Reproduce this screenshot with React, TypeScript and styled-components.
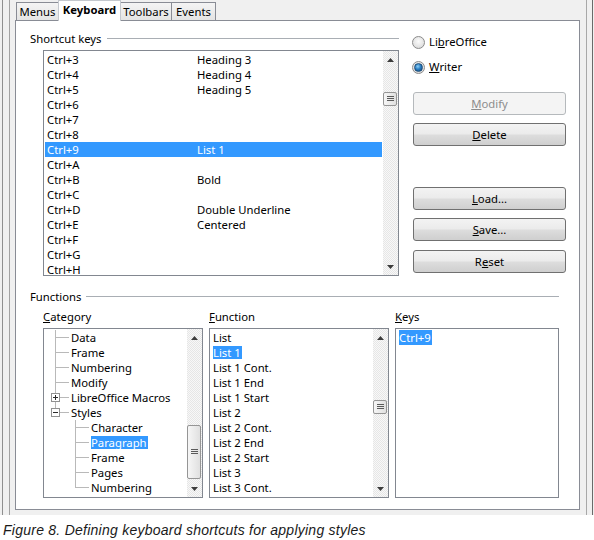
import React from 'react';
import styled, { createGlobalStyle, css } from 'styled-components';

const UI_FONT = `"Segoe UI", "Noto Sans", "Open Sans", sans-serif`;

const Global = createGlobalStyle`
  html, body { margin: 0; padding: 0; background: #ffffff; }
  * { box-sizing: border-box; }
`;

const Page = styled.div`
  width: 594px;
  height: 540px;
  overflow: hidden;
  background: #ffffff;
`;

const Dialog = styled.div`
  height: 515px;
  padding: 2px 0 0 15px;
  background-color: #f0f0f0;
  background-image: linear-gradient(
    to right,
    transparent 2px, #8f8f8f 2px, #8f8f8f 3px, transparent 3px,
    transparent 9px, #a2a2a2 9px, #a2a2a2 10px, transparent 10px,
    transparent 586px, #a8a8a8 586px, #a8a8a8 587px, transparent 587px,
    transparent 592px, #6a6a6a 592px, #6a6a6a 593px, transparent 593px
  );
  font-family: ${UI_FONT};
  font-size: 11.3px;
  color: #000;
`;

const TabBar = styled.div`
  display: flex;
  height: 18px;
  padding-left: 1px;
  align-items: flex-end;
`;

const Tab = styled.div<{ $w: number; $active?: boolean }>`
  width: ${p => p.$w}px;
  height: 18px;
  margin-right: -1px;
  border: 1px solid #898c95;
  border-bottom: none;
  background: linear-gradient(#f4f4f4, #e4e4e4);
  display: flex;
  align-items: center;
  justify-content: center;
  line-height: 14px;
  white-space: nowrap;
  ${p =>
    p.$active &&
    css`
      height: 21px;
      margin-top: -3px;
      margin-bottom: -1px;
      background: #ffffff;
      font-weight: bold;
      position: relative;
      z-index: 1;
      border-color: #c4c8ce;
      padding-bottom: 3px;
    `}
`;

const Panel = styled.div`
  width: 565px;
  height: 490px;
  border: 1px solid #898c95;
  background: #ffffff;
  padding: 10px 0 0 14px;
`;

const TopRow = styled.div`
  display: flex;
`;

const LeftCol = styled.div`
  width: 369px;
  display: flex;
  flex-direction: column;
  gap: 4px;
`;

const GroupHeader = styled.div<{ $w: number }>`
  width: ${p => p.$w}px;
  height: 15px;
  display: flex;
  align-items: center;
  gap: 5px;
  line-height: 15px;
  white-space: nowrap;
`;

const HeaderLine = styled.div`
  flex: 1;
  height: 1px;
  background: #a9aeb4;
`;

const ListBox = styled.div<{ $w: number; $h: number; $ml?: number }>`
  width: ${p => p.$w}px;
  height: ${p => p.$h}px;
  margin-left: ${p => p.$ml ?? 0}px;
  border: 1px solid #828790;
  background: #fff;
  display: flex;
  overflow: hidden;
`;

const Rows = styled.div<{ $pl?: number }>`
  flex: 1;
  padding-top: 1px;
  padding-left: ${p => p.$pl ?? 0}px;
  overflow: hidden;
  white-space: nowrap;
`;

const KeyRow = styled.div<{ $sel?: boolean }>`
  height: 15px;
  line-height: 15px;
  margin: 0 1px;
  padding-left: 2px;
  display: grid;
  grid-template-columns: 150px 1fr;
  ${p =>
    p.$sel &&
    css`
      background: #3399ff;
      color: #fff;
    `}
`;

const SBar = styled.div`
  width: 15px;
  flex: none;
  display: flex;
  flex-direction: column;
  background-color: #eeeeee;
  background-image: repeating-conic-gradient(#f8f8f8 0 25%, #e6e6e6 0 50%);
  background-size: 2px 2px;
`;

const SArrow = styled.div`
  height: 17px;
  flex: none;
  display: flex;
  align-items: center;
  justify-content: center;
`;

const SSpacer = styled.div<{ $h?: number }>`
  flex: ${p => (p.$h === undefined ? 1 : 'none')};
  height: ${p => (p.$h === undefined ? 'auto' : `${p.$h}px`)};
`;

const SThumb = styled.div<{ $h: number }>`
  height: ${p => p.$h}px;
  flex: none;
  margin-right: 1px;
  border: 1px solid #959595;
  border-radius: 2px;
  background: linear-gradient(to right, #f6f6f6, #e0e0e0);
  display: flex;
  align-items: center;
  justify-content: center;
`;

const Arrow = ({ down }: { down?: boolean }) => (
  <svg width="7" height="4" viewBox="0 0 7 4">
    <path d={down ? 'M0 0 H7 L3.5 4 Z' : 'M0 4 H7 L3.5 0 Z'} fill="#3c3c3c" />
  </svg>
);

const Grip = () => (
  <svg width="7" height="6" viewBox="0 0 7 6">
    <path d="M0 0.5 H7 M0 2.5 H7 M0 4.5 H7" stroke="#5a5a5a" strokeWidth="1" />
  </svg>
);

const Scrollbar = ({ top, thumb }: { top: number; thumb: number }) => (
  <SBar>
    <SArrow>
      <Arrow />
    </SArrow>
    <SSpacer $h={top} />
    <SThumb $h={thumb}>
      <Grip />
    </SThumb>
    <SSpacer />
    <SArrow>
      <Arrow down />
    </SArrow>
  </SBar>
);

const RightCol = styled.div`
  margin-left: 13px;
  padding-top: 3px;
  display: flex;
  flex-direction: column;
`;

const RadioRow = styled.div<{ $mt?: number }>`
  height: 16px;
  margin-top: ${p => p.$mt ?? 0}px;
  display: flex;
  align-items: center;
  gap: 4px;
  line-height: 16px;
`;

const RadioCircle = styled.span<{ $on?: boolean }>`
  width: 13px;
  height: 13px;
  border-radius: 50%;
  border: 1px solid #8b8b8b;
  background: radial-gradient(circle at 50% 40%, #fbfbfb 0%, #e4e4e4 60%, #cfcfcf 100%);
  display: flex;
  align-items: center;
  justify-content: center;
  &::after {
    content: '';
    display: ${p => (p.$on ? 'block' : 'none')};
    width: 7px;
    height: 7px;
    border-radius: 50%;
    background: radial-gradient(circle at 40% 35%, #8fd0f5 0%, #2a7fc4 45%, #0d3f73 100%);
    border: 1px solid #1e4d78;
  }
`;

const Button = styled.div<{ $mt: number; $disabled?: boolean }>`
  width: 153px;
  height: 23px;
  margin-top: ${p => p.$mt}px;
  margin-left: 1px;
  border: 1px solid #707070;
  border-radius: 3px;
  background: linear-gradient(#f3f3f3 0%, #ebebeb 48%, #dddddd 52%, #cfcfcf 100%);
  display: flex;
  align-items: center;
  justify-content: center;
  line-height: 15px;
  ${p =>
    p.$disabled &&
    css`
      border-color: #b5b9bc;
      background: #f4f4f4;
      color: #8d8d8d;
    `}
`;

const BottomSection = styled.div`
  margin-top: 13px;
  display: flex;
  flex-direction: column;
`;

const Columns = styled.div`
  display: flex;
  gap: 6px;
  margin-left: 13px;
  margin-top: 5px;
`;

const Column = styled.div`
  display: flex;
  flex-direction: column;
  gap: 4px;
`;

const ColLabel = styled.div`
  height: 15px;
  line-height: 15px;
`;

const TreeRow = styled.div`
  height: 15px;
  display: flex;
  align-items: center;
  line-height: 15px;
`;

const Gutter = styled.span<{ $level: number; $last?: boolean }>`
  flex: none;
  height: 15px;
  display: flex;
  align-items: center;
  width: ${p => (p.$level === 0 ? 27 : 47)}px;
  ${p => {
    const x = p.$level === 0 ? 11 : 31;
    const end = p.$level === 0 ? 25 : 45;
    const vh = p.$last ? '8px' : '15px';
    return css`
      background-image: linear-gradient(#b9b9b9, #b9b9b9), linear-gradient(#b9b9b9, #b9b9b9);
      background-repeat: no-repeat;
      background-size: 1px ${vh}, ${end - x}px 1px;
      background-position: ${x}px 0, ${x}px 7px;
    `;
  }}
`;

const Expander = styled.span`
  width: 9px;
  height: 9px;
  margin-left: 7px;
  border: 1px solid #919191;
  background: #fff;
  display: flex;
  align-items: center;
  justify-content: center;
`;

const Sel = styled.span<{ $tall?: boolean }>`
  background: #3399ff;
  color: #fff;
  line-height: ${p => (p.$tall ? 15 : 13)}px;
  display: inline-block;
  padding: 0 1px 0 0;
`;

const FuncRow = styled.div`
  height: 15px;
  line-height: 15px;
`;

const Caption = styled.div`
  height: 25px;
  padding: 6px 0 0 3px;
  font-family: "Liberation Sans", Arial, sans-serif;
  font-style: italic;
  font-size: 14px;
  letter-spacing: 0.25px;
  line-height: 18px;
  color: #1a1a1a;
`;

const shortcuts: [string, string][] = [
  ['Ctrl+3', 'Heading 3'],
  ['Ctrl+4', 'Heading 4'],
  ['Ctrl+5', 'Heading 5'],
  ['Ctrl+6', ''],
  ['Ctrl+7', ''],
  ['Ctrl+8', ''],
  ['Ctrl+9', 'List 1'],
  ['Ctrl+A', ''],
  ['Ctrl+B', 'Bold'],
  ['Ctrl+C', ''],
  ['Ctrl+D', 'Double Underline'],
  ['Ctrl+E', 'Centered'],
  ['Ctrl+F', ''],
  ['Ctrl+G', ''],
  ['Ctrl+H', ''],
];

type TreeItem = { label: string; level: number; last?: boolean; exp?: '+' | '-'; sel?: boolean };

const tree: TreeItem[] = [
  { label: 'Data', level: 0 },
  { label: 'Frame', level: 0 },
  { label: 'Numbering', level: 0 },
  { label: 'Modify', level: 0 },
  { label: 'LibreOffice Macros', level: 0, exp: '+' },
  { label: 'Styles', level: 0, exp: '-', last: true },
  { label: 'Character', level: 1 },
  { label: 'Paragraph', level: 1, sel: true },
  { label: 'Frame', level: 1 },
  { label: 'Pages', level: 1 },
  { label: 'Numbering', level: 1, last: true },
];

const functions = [
  'List',
  'List 1',
  'List 1 Cont.',
  'List 1 End',
  'List 1 Start',
  'List 2',
  'List 2 Cont.',
  'List 2 End',
  'List 2 Start',
  'List 3',
  'List 3 Cont.',
];

const ExpSign = ({ kind }: { kind: '+' | '-' }) => (
  <svg width="7" height="7" viewBox="0 0 7 7">
    <path d={kind === '+' ? 'M1 3.5 H6 M3.5 1 V6' : 'M1 3.5 H6'} stroke="#2b2b2b" strokeWidth="1" />
  </svg>
);

export default function App() {
  return (
    <Page>
      <Global />
      <Dialog>
        <TabBar>
          <Tab $w={43}>Menus</Tab>
          <Tab $w={63} $active>
            Keyboard
          </Tab>
          <Tab $w={52}>Toolbars</Tab>
          <Tab $w={45}>Events</Tab>
        </TabBar>
        <Panel>
          <TopRow>
            <LeftCol>
              <GroupHeader $w={369}>
                Shortcut keys
                <HeaderLine />
              </GroupHeader>
              <ListBox $w={356} $h={226} $ml={13}>
                <Rows>
                  {shortcuts.map(([k, v]) => (
                    <KeyRow key={k} $sel={k === 'Ctrl+9'}>
                      <span>{k}</span>
                      <span>{v}</span>
                    </KeyRow>
                  ))}
                </Rows>
                <Scrollbar top={24} thumb={14} />
              </ListBox>
            </LeftCol>
            <RightCol>
              <RadioRow>
                <RadioCircle />
                <span>
                  Li<u>b</u>reOffice
                </span>
              </RadioRow>
              <RadioRow $mt={9}>
                <RadioCircle $on />
                <span>
                  <u>W</u>riter
                </span>
              </RadioRow>
              <Button $mt={17} $disabled>
                <span>
                  <u>M</u>odify
                </span>
              </Button>
              <Button $mt={8}>
                <span>
                  <u>D</u>elete
                </span>
              </Button>
              <Button $mt={41}>
                <span>
                  <u>L</u>oad...
                </span>
              </Button>
              <Button $mt={8}>
                <span>
                  <u>S</u>ave...
                </span>
              </Button>
              <Button $mt={9}>
                <span>
                  R<u>e</u>set
                </span>
              </Button>
            </RightCol>
          </TopRow>
          <BottomSection>
            <GroupHeader $w={529}>
              Functions
              <HeaderLine />
            </GroupHeader>
            <Columns>
              <Column>
                <ColLabel>
                  <u>C</u>ategory
                </ColLabel>
                <ListBox $w={160} $h={170}>
                  <Rows>
                    {tree.map((t, i) => (
                      <TreeRow key={i}>
                        <Gutter $level={t.level} $last={t.last}>
                          {t.exp && (
                            <Expander>
                              <ExpSign kind={t.exp} />
                            </Expander>
                          )}
                        </Gutter>
                        {t.sel ? <Sel>{t.label}</Sel> : <span>{t.label}</span>}
                      </TreeRow>
                    ))}
                  </Rows>
                  <Scrollbar top={79} thumb={54} />
                </ListBox>
              </Column>
              <Column>
                <ColLabel>
                  <u>F</u>unction
                </ColLabel>
                <ListBox $w={180} $h={170}>
                  <Rows $pl={3}>
                    {functions.map((f, i) => (
                      <FuncRow key={i}>{f === 'List 1' ? <Sel>{f}</Sel> : f}</FuncRow>
                    ))}
                  </Rows>
                  <Scrollbar top={54} thumb={14} />
                </ListBox>
              </Column>
              <Column>
                <ColLabel>
                  <u>K</u>eys
                </ColLabel>
                <ListBox $w={164} $h={170}>
                  <Rows $pl={3}>
                    <FuncRow>
                      <Sel $tall>Ctrl+9</Sel>
                    </FuncRow>
                  </Rows>
                </ListBox>
              </Column>
            </Columns>
          </BottomSection>
        </Panel>
      </Dialog>
      <Caption>Figure 8. Defining keyboard shortcuts for applying styles</Caption>
    </Page>
  );
}
